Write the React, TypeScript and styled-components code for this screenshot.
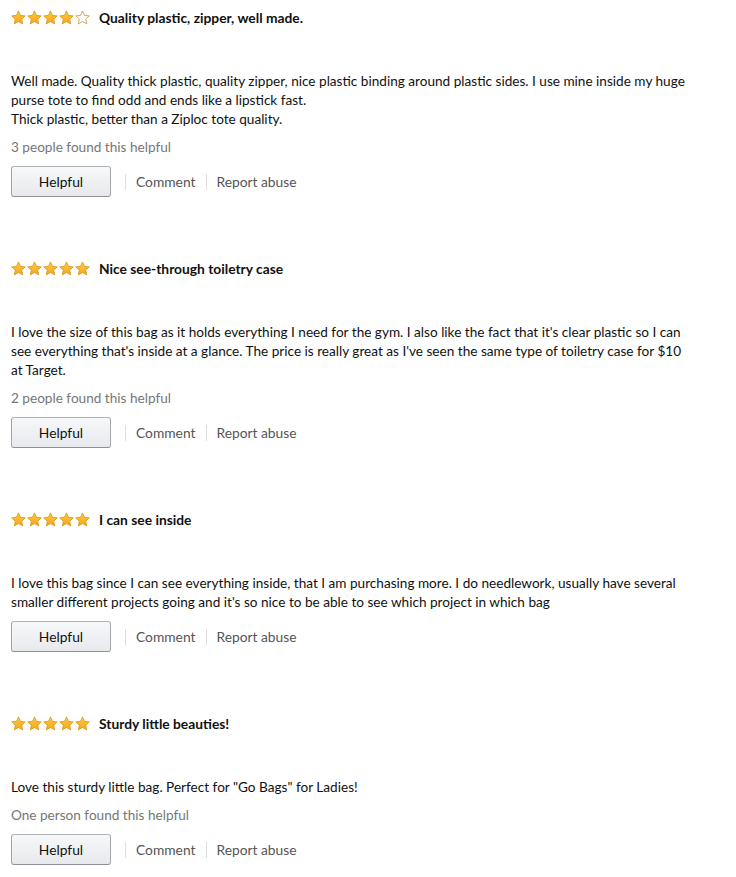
import styled, { createGlobalStyle } from 'styled-components';

interface Review {
  rating: number;
  title: string;
  lines: string[];
  helpful?: string;
}

// lines follow the reference's wrapping
const reviews: Review[] = [
  {
    rating: 4,
    title: 'Quality plastic, zipper, well made.',
    lines: [
      'Well made. Quality thick plastic, quality zipper, nice plastic binding around plastic sides. I use mine inside my huge',
      'purse tote to find odd and ends like a lipstick fast.',
      'Thick plastic, better than a Ziploc tote quality.',
    ],
    helpful: '3 people found this helpful',
  },
  {
    rating: 5,
    title: 'Nice see-through toiletry case',
    lines: [
      "I love the size of this bag as it holds everything I need for the gym. I also like the fact that it's clear plastic so I can",
      "see everything that's inside at a glance. The price is really great as I've seen the same type of toiletry case for $10",
      'at Target.',
    ],
    helpful: '2 people found this helpful',
  },
  {
    rating: 5,
    title: 'I can see inside',
    lines: [
      'I love this bag since I can see everything inside, that I am purchasing more. I do needlework, usually have several',
      "smaller different projects going and it's so nice to be able to see which project in which bag",
    ],
  },
  {
    rating: 5,
    title: 'Sturdy little beauties!',
    lines: ['Love this sturdy little bag. Perfect for "Go Bags" for Ladies!'],
    helpful: 'One person found this helpful',
  },
];

const GlobalStyle = createGlobalStyle`
  body {
    margin: 0;
    background: #fff;
    font-family: Lato, "Open Sans", sans-serif;
    color: #111;
  }
`;

const List = styled.div`
  padding: 8px 11px 0;
  display: flex;
  flex-direction: column;
  gap: 62px;
`;

const Card = styled.div`
  display: flex;
  flex-direction: column;
`;

const Header = styled.div`
  display: flex;
  align-items: center;
  gap: 9px;
  height: 18px;
`;

const Stars = styled.div`
  display: flex;
  gap: 1px;
`;

const Title = styled.span`
  font-weight: 700;
  font-size: 13.8px;
  color: #111;
`;

const Body = styled.div`
  margin-top: 46px;
  font-size: 13.6px;
  line-height: 19px;
  white-space: nowrap;
`;

const Helpful = styled.div`
  margin-top: 9px;
  font-size: 13.6px;
  line-height: 19px;
  color: #767676;
`;

const Actions = styled.div`
  margin-top: 9px;
  display: flex;
  align-items: center;
`;

const Button = styled.button`
  width: 100px;
  height: 31px;
  border: 1px solid #adb1b8;
  border-color: #adb1b8 #a2a6ac #8d9096;
  border-radius: 3px;
  background: linear-gradient(to bottom, #f7f8fa, #e7e9ec);
  font-family: inherit;
  font-size: 13.8px;
  color: #111;
  padding: 0;
`;

const Link = styled.span`
  display: flex;
  align-items: center;
  font-size: 13.8px;
  color: #555;
  &::before {
    content: '';
    width: 1px;
    height: 16px;
    background: #ddd;
    margin: 0 9px 0 11px;
  }
  &:first-of-type::before {
    margin: 0 10px 0 14px;
  }
`;

const Star = ({ filled }: { filled: boolean }) => (
  <svg width="15" height="15" viewBox="0 0 24 24">
    <defs>
      <linearGradient id="sg" x1="0" y1="0" x2="0" y2="1">
        <stop offset="0" stopColor="#ffce3d" />
        <stop offset="1" stopColor="#f7a41d" />
      </linearGradient>
    </defs>
    <path
      d="M12 1.5l3.2 7.1 7.6.8-5.7 5.2 1.6 7.6L12 18.3l-6.7 3.9 1.6-7.6L1.2 9.4l7.6-.8z"
      fill={filled ? 'url(#sg)' : '#fff'}
      stroke={filled ? '#d6960f' : '#c9953a'}
      strokeWidth="1.3"
      strokeLinejoin="round"
    />
  </svg>
);

export default function App() {
  return (
    <>
      <GlobalStyle />
      <List>
        {reviews.map((r) => (
          <Card key={r.title}>
            <Header>
              <Stars>
                {[0, 1, 2, 3, 4].map((i) => (
                  <Star key={i} filled={i < r.rating} />
                ))}
              </Stars>
              <Title>{r.title}</Title>
            </Header>
            <Body>
              {r.lines.map((line) => (
                <div key={line}>{line}</div>
              ))}
            </Body>
            {r.helpful && <Helpful>{r.helpful}</Helpful>}
            <Actions>
              <Button>Helpful</Button>
              <Link>Comment</Link>
              <Link>Report abuse</Link>
            </Actions>
          </Card>
        ))}
      </List>
    </>
  );
}
